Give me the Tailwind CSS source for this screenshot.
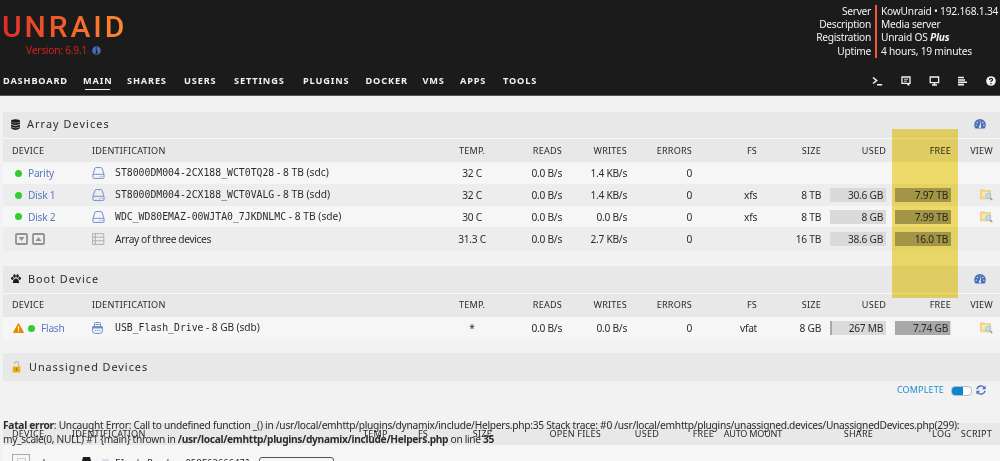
<!DOCTYPE html>
<html lang="en">
<head>
  <meta charset="UTF-8" />
  <meta name="viewport" content="width=device-width, initial-scale=1" />
  <title>KowUnraid/Main</title>
  <script src="https://cdn.jsdelivr.net/npm/@tailwindcss/browser@4"></script>
</head>
<body class="relative h-[461px] w-[1000px] overflow-hidden bg-[#f2f2f2] font-['Noto_Sans',sans-serif] text-[10.2px] leading-[14px] tracking-[-0.27px] text-[#2b2b2b]">
  <!-- Icon sprites -->
  <svg class="hidden">
    <symbol id="i-disk" viewBox="0 0 13 12">
      <path d="M1 7.3 3 1.2Q3.2.6 3.8.6h5.4q.6 0 .8.6l2 6.1v3.2q0 .9-.9.9H1.9Q1 11.4 1 10.5ZM1 7.3h11M7.5 9.4h.9M9.7 9.4h.9" fill="none" stroke="currentColor" />
    </symbol>
    <symbol id="i-dash" viewBox="0 0 12 10">
      <path d="M1.5 9.5A5.8 5.8 0 1 1 10.5 9.5Z" fill="currentColor" />
      <path d="M6.1 7.8 6.8 3.6" stroke="#e8e8e8" stroke-width="1" />
      <circle cx="6" cy="7.7" r="1.2" fill="#e8e8e8" />
      <g fill="#e8e8e8"><circle cx="2.2" cy="6.2" r=".7" /><circle cx="3.4" cy="3.5" r=".7" /><circle cx="6" cy="2" r=".6" /><circle cx="8.9" cy="3.5" r=".7" /><circle cx="9.9" cy="6.2" r=".7" /></g>
    </symbol>
    <symbol id="i-folder" viewBox="0 0 13 12">
      <path d="M.5 2V.9h4l.8.9h5.2v8H.5Z" fill="#f6da92" stroke="#e8c06c" stroke-width=".7" />
      <path d="M2 4h7M2 6h4" stroke="#fff3cc" />
      <circle cx="8.3" cy="6.8" r="2.6" fill="#bddcf2" stroke="#9cc0dd" stroke-width=".8" />
      <path d="m10.2 8.9 2 2.2" stroke="#b1805a" stroke-width="1.4" />
    </symbol>
  </svg>

  <!-- Header -->
  <header class="flex h-[96px] flex-col border-b border-[#555] bg-[#1c1b1b] text-[#f2f2f2]">
    <div class="flex h-[72px] justify-between">
      <div class="w-[140px] pt-[11px] pl-[2px]">
        <div class="w-[126px] bg-linear-to-r from-[#e22828] to-[#ff8c2f] bg-clip-text font-[Roboto] text-[30px] leading-[32px] font-medium tracking-[2.9px] text-transparent">UNRAID</div>
        <div class="flex items-center gap-[5px] pl-[24px] text-[#d02222]">
          <span class="tracking-[-0.22px]">Version: 6.9.1</span>
          <svg class="h-[9px] w-[9px]" viewBox="0 0 9 9"><circle cx="4.5" cy="4.5" r="4.3" fill="#486dba" /><path d="M3.8 1.8h1.4M3.4 4h1.2v2.9M3.3 7.1h2.6" stroke="#1c1b1b" stroke-width="1.2" fill="none" /></svg>
        </div>
      </div>
      <div class="flex pt-[5px] leading-[13.2px]">
        <div class="h-[53px] border-r-2 border-[#f15a2c] pr-[4px] text-right">
          <p>Server</p><p>Description</p><p>Registration</p><p>Uptime</p>
        </div>
        <div class="w-[123px] pl-[4px] tracking-[-0.22px] whitespace-nowrap">
          <p>KowUnraid • 192.168.1.34</p><p>Media server</p><p>Unraid OS <b><i>Plus</i></b></p><p>4 hours, 19 minutes</p>
        </div>
      </div>
    </div>
    <div class="flex justify-between pr-[4px] pl-[3px]">
      <nav class="flex gap-[15px] text-[9.2px] leading-[17px] font-bold tracking-[0.85px]">
        <a class="w-[65px]">DASHBOARD</a>
        <a class="w-[29px]">MAIN<span class="block h-px w-[25px] translate-x-[2px] bg-[#f2f2f2]"></span></a>
        <a class="w-[42px]">SHARES</a>
        <a class="w-[35px]">USERS</a>
        <a class="w-[54px]">SETTINGS</a>
        <a class="w-[47.5px]">PLUGINS</a>
        <a class="w-[42px]">DOCKER</a>
        <a class="w-[22.5px]">VMS</a>
        <a class="w-[28px]">APPS</a>
        <a class="w-[36px]">TOOLS</a>
      </nav>
      <div class="flex items-center gap-[18px] pb-px">
        <svg class="h-[10px] w-[11px]" viewBox="0 0 11 10"><path d="m1 1.5 3.6 3L1 7.5M5 8.7h5.2" fill="none" stroke="#f2f2f2" stroke-width="1.6" /></svg>
        <svg class="h-[10px] w-[10px]" viewBox="0 0 10 10"><path d="M1 1h8v6.4H7.6v1.4L6 7.4H1Z" fill="none" stroke="#f2f2f2" stroke-width="1.3" /><path d="M3 3.2h4M3 5.2h3" stroke="#f2f2f2" stroke-width=".9" /></svg>
        <svg class="h-[10px] w-[11px]" viewBox="0 0 11 10"><path d="M1.2 1h8.4v5.6H1.2Z" fill="none" stroke="#f2f2f2" stroke-width="1.3" /><path d="M3 9h5M5.4 6.8V9" stroke="#f2f2f2" stroke-width="1.5" /></svg>
        <svg class="h-[10px] w-[10px]" viewBox="0 0 10 10"><path d="M0 1.5h6M0 4h7M0 6.3h9M0 8.6h6" stroke="#f2f2f2" stroke-width="1.6" /></svg>
        <svg class="h-[10px] w-[10px]" viewBox="0 0 10 10"><circle cx="5" cy="5" r="4.8" fill="#f2f2f2" /><path d="M3.4 3.9Q3.5 2.4 5 2.4T6.6 3.8Q6.6 4.5 5 5.2V6M5 7v1.2" fill="none" stroke="#1c1b1b" stroke-width="1.2" /></svg>
      </div>
    </div>
  </header>

  <main class="px-[3px] pt-[16px]">
    <!-- Array devices -->
    <section class="h-[154px] w-[997px]">
      <div class="flex h-[27px] items-center border-b border-[#f8f8f8] bg-[#e8e8e8] pr-[14px] pb-[2px] pl-[8px] text-[10.8px] tracking-[1.1px]">
        <svg class="mr-[7px] h-[11px] w-[9px]" viewBox="0 0 9 11"><g fill="#1c1b1b"><ellipse cx="4.5" cy="2" rx="4.5" ry="1.8" /><path d="M0 3q4.5 2.5 9 0v1.8q-4.5 2.5-9 0ZM0 5.6q4.5 2.5 9 0v1.8q-4.5 2.5-9 0ZM0 8.1q4.5 2.5 9 0v1.2q-4.5 3.2-9 0Z" /></g></svg>
        <span>Array Devices</span>
        <svg class="ml-auto h-[10px] w-[12px] text-[#486dba]"><use href="#i-dash" /></svg>
      </div>
      <div class="grid h-[23px] grid-cols-[89px_348px_64px_58px_65px_65px_65px_64px_65px_65px_42px] items-center bg-[#e8e8e8] text-right text-[9.1px] tracking-[0.2px]">
        <span class="pl-[9px] text-left">DEVICE</span><span class="text-left">IDENTIFICATION</span><span class="text-center">TEMP.</span><span>READS</span><span>WRITES</span><span>ERRORS</span><span>FS</span><span>SIZE</span><span>USED</span><span>FREE</span><span>VIEW</span>
      </div>
      <div class="grid h-[22px] grid-cols-[89px_348px_64px_58px_65px_65px_65px_64px_65px_65px_42px] items-center bg-[#f6f6f6] text-right">
        <span class="flex items-center gap-[6px] pl-[12px] text-[#5b78c0]"><i class="h-[7px] w-[7px] rounded-full bg-[#33cc33]"></i>Parity</span>
        <span class="flex items-center gap-[10px] text-left"><svg class="h-[12px] w-[13px] text-[#7590cc]"><use href="#i-disk" /></svg><span class="pb-px tracking-[0.03px]"><span class="font-['DejaVu_Sans_Mono'] text-[9.8px] tracking-normal">ST8000DM004-2CX188_WCT0TQ28</span> - 8 TB (sdc)</span></span>
        <span class="text-center">32 C</span><span>0.0 B/s</span><span>1.4 KB/s</span><span>0</span>
      </div>
      <div class="grid h-[22px] grid-cols-[89px_348px_64px_58px_65px_65px_65px_64px_65px_65px_42px] items-center bg-[#ededed] text-right">
        <span class="flex items-center gap-[6px] pl-[12px] text-[#5b78c0]"><i class="h-[7px] w-[7px] rounded-full bg-[#33cc33]"></i>Disk 1</span>
        <span class="flex items-center gap-[10px] text-left"><svg class="h-[12px] w-[13px] text-[#7590cc]"><use href="#i-disk" /></svg><span class="pb-px tracking-[0.03px]"><span class="font-['DejaVu_Sans_Mono'] text-[9.8px] tracking-normal">ST8000DM004-2CX188_WCT0VALG</span> - 8 TB (sdd)</span></span>
        <span class="text-center">32 C</span><span>0.0 B/s</span><span>1.4 KB/s</span><span>0</span><span>xfs</span><span>8 TB</span>
        <span class="ml-[9px] bg-[#dadada] pr-[3px]">30.6 GB</span>
        <span class="ml-[9px] bg-[#a8a8a8] pr-[3px]">7.97 TB</span>
        <svg class="ml-auto h-[12px] w-[13px]"><use href="#i-folder" /></svg>
      </div>
      <div class="grid h-[21px] grid-cols-[89px_348px_64px_58px_65px_65px_65px_64px_65px_65px_42px] items-center bg-[#f6f6f6] text-right">
        <span class="flex items-center gap-[6px] pl-[12px] text-[#5b78c0]"><i class="h-[7px] w-[7px] rounded-full bg-[#33cc33]"></i>Disk 2</span>
        <span class="flex items-center gap-[10px] text-left"><svg class="h-[12px] w-[13px] text-[#7590cc]"><use href="#i-disk" /></svg><span class="pb-px tracking-[0.03px]"><span class="font-['DejaVu_Sans_Mono'] text-[9.8px] tracking-normal">WDC_WD80EMAZ-00WJTA0_7JKDNLMC</span> - 8 TB (sde)</span></span>
        <span class="text-center">30 C</span><span>0.0 B/s</span><span>0.0 B/s</span><span>0</span><span>xfs</span><span>8 TB</span>
        <span class="ml-[9px] bg-[#dadada] pr-[3px]">8 GB</span>
        <span class="ml-[9px] bg-[#a8a8a8] pr-[3px]">7.99 TB</span>
        <svg class="ml-auto h-[12px] w-[13px]"><use href="#i-folder" /></svg>
      </div>
      <div class="grid h-[24px] grid-cols-[89px_348px_64px_58px_65px_65px_65px_64px_65px_65px_42px] items-center bg-[#ededed] text-right">
        <span class="flex gap-[4px] pl-[12px] text-[#929292]">
          <svg class="h-[12px] w-[13px]" viewBox="0 0 13 12"><rect x="1" y="1" width="11" height="10" rx="1" fill="none" stroke="currentColor" stroke-width="1.8" /><path d="M3.5 4h6L6.5 8Z" fill="currentColor" /></svg>
          <svg class="h-[12px] w-[13px]" viewBox="0 0 13 12"><rect x="1" y="1" width="11" height="10" rx="1" fill="none" stroke="currentColor" stroke-width="1.8" /><path d="M3.5 8h6L6.5 4Z" fill="currentColor" /></svg>
        </span>
        <span class="flex items-center gap-[10px] text-left tracking-[-0.36px]"><svg class="h-[12px] w-[13px]" viewBox="0 0 13 12"><path d="M.6.6h11.2v10.8H.6ZM.6 4.2h11.2M.6 7.8h11.2M3.4.6v10.8" fill="none" stroke="#a9a9a9" stroke-width=".9" /></svg>Array of three devices</span>
        <span class="text-center">31.3 C</span><span>0.0 B/s</span><span>2.7 KB/s</span><span>0</span><span></span><span>16 TB</span>
        <span class="ml-[9px] bg-[#dadada] pr-[3px]">38.6 GB</span>
        <span class="ml-[9px] bg-[#a8a8a8] pr-[3px]">16.0 TB</span>
      </div>
    </section>

    <!-- Boot device -->
    <section class="h-[87px] w-[997px]">
      <div class="flex h-[28px] items-center border-b border-[#f8f8f8] bg-[#e8e8e8] pr-[14px] pb-[2px] pl-[8px] text-[10.8px] tracking-[1px]">
        <svg class="mr-[7px] h-[10px] w-[10px]" viewBox="0 0 10 10"><g fill="#1c1b1b"><ellipse cx="1.3" cy="4.3" rx="1.2" ry="1.6" /><ellipse cx="3.5" cy="2" rx="1.3" ry="1.8" /><ellipse cx="6.5" cy="2" rx="1.3" ry="1.8" /><ellipse cx="8.7" cy="4.3" rx="1.2" ry="1.6" /><path d="M5 4.5c1.6 0 3.2 2.2 3.2 3.6C8.2 9.8 6.2 9 5 9S1.8 9.8 1.8 8.1C1.8 6.7 3.4 4.5 5 4.5Z" /></g></svg>
        <span>Boot Device</span>
        <svg class="ml-auto h-[10px] w-[12px] text-[#486dba]"><use href="#i-dash" /></svg>
      </div>
      <div class="grid h-[23px] grid-cols-[89px_348px_64px_58px_65px_65px_65px_64px_65px_65px_42px] items-center bg-[#e8e8e8] pb-[2px] text-right text-[9.1px] tracking-[0.2px]">
        <span class="pl-[9px] text-left">DEVICE</span><span class="text-left">IDENTIFICATION</span><span class="text-center">TEMP.</span><span>READS</span><span>WRITES</span><span>ERRORS</span><span>FS</span><span>SIZE</span><span>USED</span><span>FREE</span><span>VIEW</span>
      </div>
      <div class="grid h-[22px] grid-cols-[89px_348px_64px_58px_65px_65px_65px_64px_65px_65px_42px] items-center bg-[#f6f6f6] text-right">
        <span class="flex items-center pl-[10px] text-[#5b78c0]">
          <svg class="h-[10px] w-[11px]" viewBox="0 0 11 10"><path d="M5.5.5 10.5 9.5H.5Z" fill="#e68a00" stroke="#e68a00" stroke-linejoin="round" /><path d="M5.5 3.2v3.2M5.5 7.3v1.3" stroke="#fff" stroke-width="1.2" /></svg>
          <i class="mr-[6px] ml-[4px] h-[7px] w-[7px] rounded-full bg-[#33cc33]"></i>Flash
        </span>
        <span class="flex items-center gap-[12px] text-left"><svg class="h-[12px] w-[11px]" viewBox="0 0 11 12"><path d="M2.5 4.5V1.5q0-1 1-1h4q1 0 1 1v3M.6 4.8h9.8v4q0 2.6-2.6 2.6H3.2Q.6 11.4.6 8.8Z" fill="none" stroke="#6f8bc9" /><path d="M1 4.8h9V6H1ZM3 8.5h1.2M5 8.5h1.2M7 8.5h1.2M3.5 2.5h4" fill="#6f8bc9" stroke="#6f8bc9" stroke-width=".9" /></svg><span class="pb-px tracking-[-0.08px]"><span class="font-['DejaVu_Sans_Mono'] text-[9.8px] tracking-normal">USB_Flash_Drive</span> - 8 GB (sdb)</span></span>
        <span class="text-center">*</span><span>0.0 B/s</span><span>0.0 B/s</span><span>0</span><span>vfat</span><span>8 GB</span>
        <span class="ml-[9px] border-l-2 border-[#a8a8a8] bg-[#dadada] pr-[3px]">267 MB</span>
        <span class="ml-[9px] border-r border-[#dadada] bg-[#a8a8a8] pr-[2px]">7.74 GB</span>
        <svg class="ml-auto h-[12px] w-[13px]"><use href="#i-folder" /></svg>
      </div>
    </section>

    <!-- Unassigned devices -->
    <section class="w-[997px]">
      <div class="flex h-[28px] items-center bg-[#e8e8e8] pb-px pl-[9px] text-[10.8px] tracking-[1px]">
        <svg class="mr-[8px] h-[12px] w-[9px]" viewBox="0 0 9 12"><path d="M2.5 3V2.3Q2.6.6 4.6.6t2.1 1.9V6" fill="none" stroke="#b9b9b9" stroke-width="1.2" /><rect x=".8" y="5.5" width="7.4" height="6" rx=".6" fill="#e0ad18" stroke="#f2d35c" stroke-width=".6" /><path d="M4.5 7.5v2" stroke="#8f6a08" stroke-width="1.2" /></svg>
        <span>Unassigned Devices</span>
      </div>
      <div class="flex h-[42px] items-start justify-end pt-[2px] pr-[14px] text-[#1c8fcb]">
        <span class="text-[9px] tracking-[0.15px]">COMPLETE</span>
        <span class="mt-[3px] ml-[7px] flex h-[10px] w-[21px] overflow-hidden rounded-[4px] border border-[#bbb] bg-white"><i class="h-full w-[11px] bg-[#0a87cf]"></i></span>
        <svg class="mt-[2px] ml-[4px] h-[10px] w-[10px]" viewBox="0 0 10 10"><path d="M.9 4.2A4.1 4.1 0 0 1 8.3 2.7M9.1 5.8A4.1 4.1 0 0 1 1.7 7.3" fill="none" stroke="#486dba" stroke-width="1.4" /><path d="M9.6.5v3.7H5.9ZM.4 9.5V5.8h3.7Z" fill="#486dba" /></svg>
      </div>
      <div class="grid h-[22px] grid-cols-[69px_291px_24px_41px_64px_109px_58px_55px_68px_91px_78px_41px] items-center bg-[#e8e8e8] text-right text-[9.1px] tracking-[0.2px]">
        <span class="pl-[9px] text-left">DEVICE</span><span class="text-left">IDENTIFICATION</span><span class="whitespace-nowrap">TEMP</span><span>FS</span><span>SIZE</span><span>OPEN FILES</span><span>USED</span><span>FREE</span><span class="tracking-[-0.25px] whitespace-nowrap">AUTO MOUNT</span><span>SHARE</span><span>LOG</span><span>SCRIPT</span>
      </div>
      <div class="flex h-[22px] items-start bg-[#f6f6f6] pt-[9px] pl-[9px]">
        <span class="h-[14px] w-[18px] border border-[#aaa] pt-[3px] pl-[4px]"><i class="block h-[9px] w-[9px] border border-[#ccc]"></i></span>
        <span class="mt-[2px] ml-[9px] w-[42px]">dev</span>
        <svg class="mt-[3px] ml-px h-[10px] w-[9px]" viewBox="0 0 9 10"><path d="M0 4 1 0h7l1 4v6H0Z" fill="#1c1b1b" /></svg>
        <span class="mt-[5px] ml-[11px] h-[3px] w-[7px] bg-[#dcdce8]"></span>
        <span class="mt-[2px] ml-[6px] w-[144px] font-['DejaVu_Sans_Mono'] text-[9px] tracking-normal whitespace-nowrap">Flash_Reader_058F63666471</span>
        <span class="mt-[3px] h-[14px] w-[75px] rounded-[3px] border border-[#555] pt-px pl-[12px] leading-[12px] text-[#777]">⊘ MOUNT</span>
      </div>
    </section>
  </main>

  <!-- Column highlight -->
  <div class="absolute top-[129px] left-[892px] h-[169px] w-[66px] bg-[#f6e26d] mix-blend-multiply"></div>

  <!-- PHP error printed over the table -->
  <div class="absolute top-[418px] left-[3px] w-[994px] leading-[14px] whitespace-nowrap">
    <p>
      <b>Fatal error</b>: Uncaught Error: Call to undefined function _() in /usr/local/emhttp/plugins/dynamix/include/Helpers.php:35 Stack trace: #0 /usr/local/emhttp/plugins/unassigned.devices/UnassignedDevices.php(299):
    </p>
    <p class="tracking-[-0.32px]">my_scale(0, NULL) #1 {main} thrown in <b>/usr/local/emhttp/plugins/dynamix/include/Helpers.php</b> on line <b>35</b></p>
  </div>
</body>
</html>
